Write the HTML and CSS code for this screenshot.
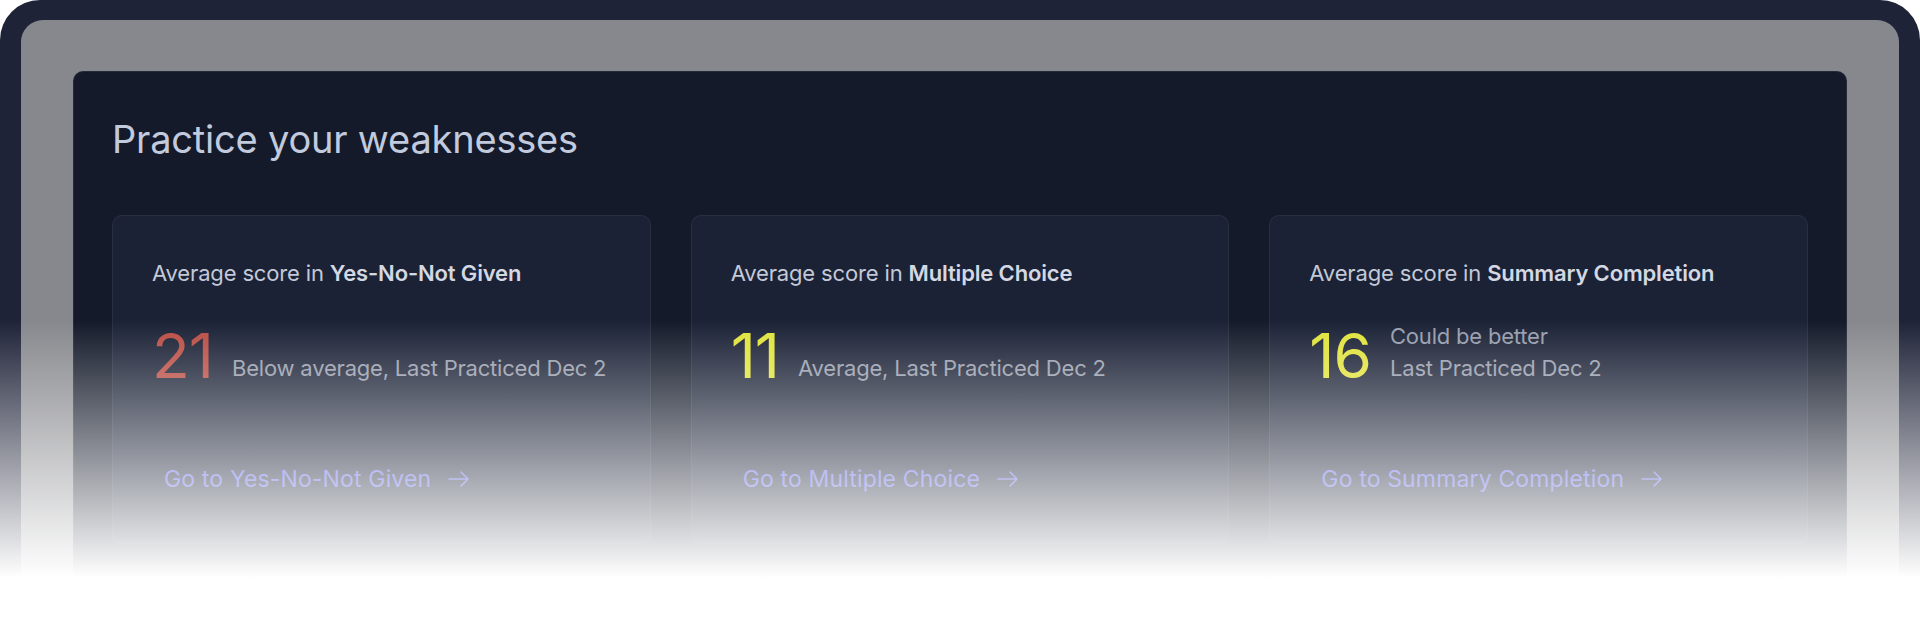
FILE: index.html
```html
<!DOCTYPE html>
<html lang="en">
<head>
<meta charset="utf-8">
<title>Practice your weaknesses</title>
<link rel="stylesheet" href="styles.css">
</head>
<body>
  <div class="frame">
    <div class="bezel">
      <section class="panel">
        <h2 class="title">Practice your weaknesses</h2>
        <div class="cards">
          <article class="card">
            <p class="label">Average score in <strong>Yes-No-Not Given</strong></p>
            <div class="score-row">
              <span class="score score-low">21</span>
              <p class="desc">Below average, Last Practiced Dec 2</p>
            </div>
            <a class="link" href="#">Go to Yes-No-Not Given
              <svg class="arrow" width="22" height="16" viewBox="0 0 22 16" fill="none"><path d="M1 8h19M13 1l7 7-7 7" stroke="currentColor" stroke-width="1.6" stroke-linecap="round" stroke-linejoin="round"/></svg>
            </a>
          </article>
          <article class="card">
            <p class="label">Average score in <strong>Multiple Choice</strong></p>
            <div class="score-row">
              <span class="score score-mid">11</span>
              <p class="desc">Average, Last Practiced Dec 2</p>
            </div>
            <a class="link" href="#">Go to Multiple Choice
              <svg class="arrow" width="22" height="16" viewBox="0 0 22 16" fill="none"><path d="M1 8h19M13 1l7 7-7 7" stroke="currentColor" stroke-width="1.6" stroke-linecap="round" stroke-linejoin="round"/></svg>
            </a>
          </article>
          <article class="card">
            <p class="label">Average score in <strong>Summary Completion</strong></p>
            <div class="score-row">
              <span class="score score-mid">16</span>
              <p class="desc">Could be better<br>Last Practiced Dec 2</p>
            </div>
            <a class="link" href="#">Go to Summary Completion
              <svg class="arrow" width="22" height="16" viewBox="0 0 22 16" fill="none"><path d="M1 8h19M13 1l7 7-7 7" stroke="currentColor" stroke-width="1.6" stroke-linecap="round" stroke-linejoin="round"/></svg>
            </a>
          </article>
        </div>
      </section>
    </div>
  </div>
  <div class="fade"></div>
</body>
</html>
```

FILE: styles.css
```css
* { box-sizing: border-box; }

html, body {
  margin: 0;
  height: 640px;
  overflow: hidden;
  background: #ffffff;
  font-family: Inter, "Noto Sans", sans-serif;
}

body { position: relative; }

.frame {
  height: 640px;
  background: #1f2338;
  border-radius: 40px 40px 0 0;
  padding: 20px 21px 0 21px;
}

.bezel {
  height: 100%;
  background: #87888d;
  border-radius: 22px 22px 0 0;
  padding: 51px 52px 0 52px;
}

.panel {
  background: #141a2a;
  border: 1px solid rgba(255, 255, 255, 0.07);
  border-radius: 10px;
  padding: 44px 38px 60px 38px;
}

.title {
  margin: 0;
  font-size: 38px;
  line-height: 46px;
  font-weight: 400;
  color: #c2cade;
  letter-spacing: -0.2px;
}

.cards {
  margin-top: 53px;
  display: grid;
  grid-template-columns: repeat(3, 1fr);
  gap: 40px;
}

.card {
  background: #1b2236;
  border: 1px solid rgba(255, 255, 255, 0.06);
  border-radius: 10px;
  padding: 42px 39px 40px 39px;
  display: flex;
  flex-direction: column;
  align-items: flex-start;
}

.label {
  margin: 0;
  font-size: 22px;
  line-height: 30px;
  color: #c3c9d6;
  letter-spacing: -0.15px;
}

.label strong {
  font-weight: 600;
  color: #d3d8e3;
}

.score-row {
  margin-top: 37px;
  margin-bottom: 68px;
  height: 62px;
  display: flex;
  align-items: flex-end;
  gap: 19px;
}

.score {
  font-size: 62px;
  line-height: 62px;
  font-weight: 400;
  letter-spacing: -1px;
}

.score-low { color: #b94c42; }
.score-mid { color: #e0e33a; }

.desc {
  margin: 0 0 3px 0;
  font-size: 22px;
  line-height: 32px;
  color: #969cab;
  letter-spacing: -0.2px;
}

.link {
  margin-top: auto;
  padding: 10px 12px;
  display: inline-flex;
  align-items: center;
  gap: 17px;
  font-size: 23px;
  line-height: 28px;
  color: #5c60e0;
  text-decoration: none;
  letter-spacing: 0.15px;
}

.arrow { display: block; }

.fade {
  position: absolute;
  inset: 0;
  pointer-events: none;
  background: linear-gradient(to bottom, rgba(255, 255, 255, 0) 320px, #ffffff 578px);
}
```
